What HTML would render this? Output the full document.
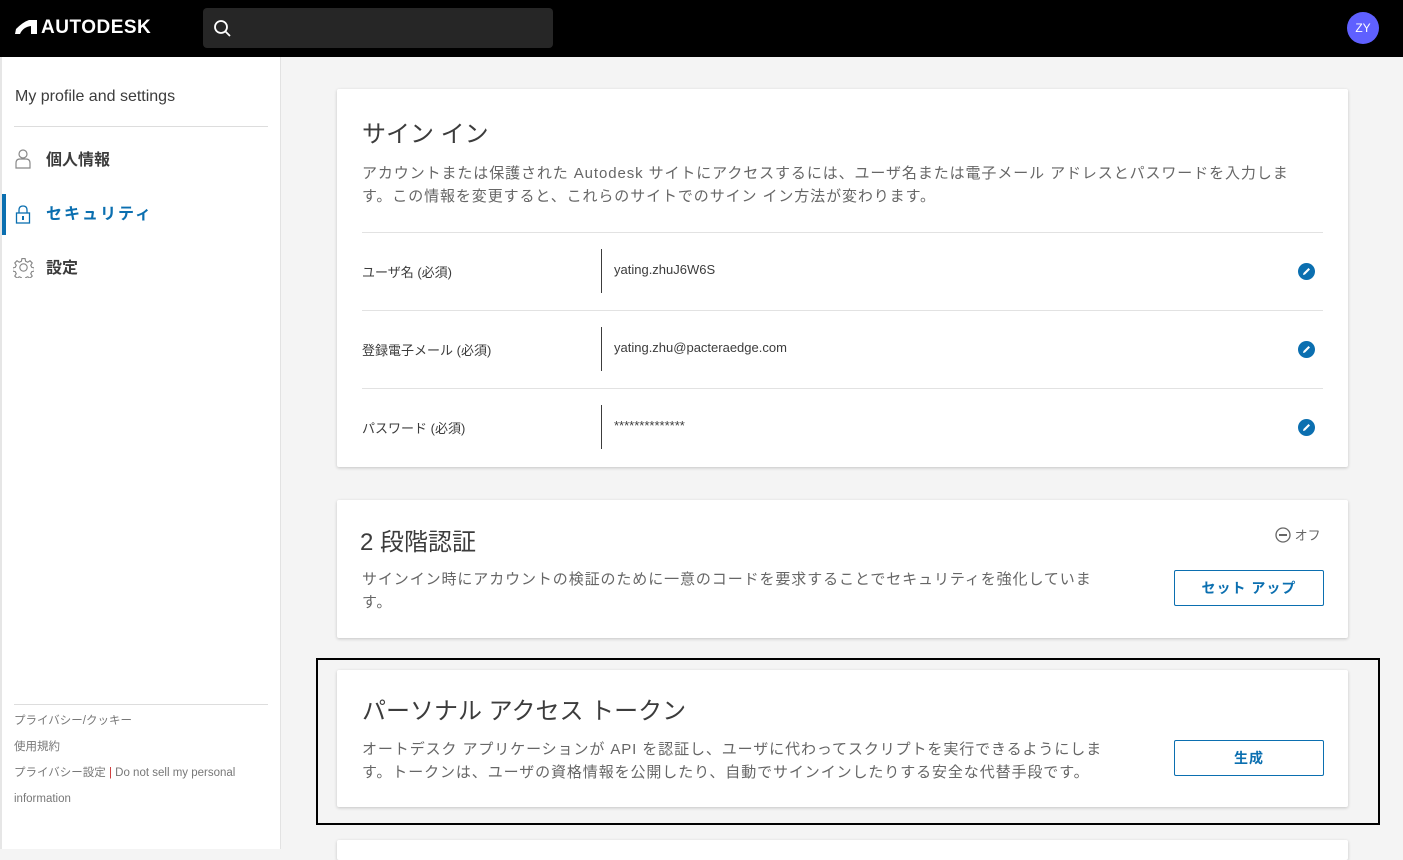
<!DOCTYPE html>
<html><head><meta charset="utf-8"><style>
*{margin:0;padding:0;box-sizing:border-box}
body{width:1403px;height:849px;overflow:hidden;background:#f4f4f4;font-family:"Liberation Sans","Noto Sans CJK JP",sans-serif;color:#3c3c3c;position:relative}
.top{position:absolute;left:0;top:0;width:1403px;height:57px;background:#000}
.logo{position:absolute;left:15px;top:17px;color:#fff;font-weight:bold;font-size:19px;letter-spacing:0.5px}
.search{position:absolute;left:203px;top:8px;width:350px;height:40px;background:#262626;border-radius:4px}
.av{position:absolute;left:1347px;top:12px;width:32px;height:32px;border-radius:50%;background:#5f60ff;color:#fff;font-size:12px;text-align:center;line-height:32px}
.side{position:absolute;left:0;top:57px;width:281px;height:792px;background:#fff;border-right:1px solid #e2e2e2;border-left:2px solid #e6e6e6}
.abs{position:absolute}
.card{position:absolute;left:337px;width:1011px;background:#fff;box-shadow:0 1px 3px rgba(0,0,0,.2);border-radius:2px}
.h{font-size:24px;color:#3c3c3c;font-weight:normal}
.p{font-size:15px;color:#666;line-height:23px;letter-spacing:0.9px;white-space:nowrap}
.lbl{font-size:13px;color:#3c3c3c}
.val{font-size:13px;color:#3c3c3c}
.pen{position:absolute;width:17px;height:17px;border-radius:50%;background:#0b6fb0}
.btn{position:absolute;width:150px;height:36px;border:1px solid #0b6fb0;border-radius:2px;color:#0b6fb0;font-weight:bold;font-size:14px;text-align:center;line-height:34px;letter-spacing:1px}
.hr{position:absolute;left:25px;width:961px;height:1px;background:#e2e2e2}
.vl{position:absolute;left:264px;width:1px;height:44px;background:#3c3c3c}
</style></head><body>
<div class="top">
<div class="logo"><svg width="22" height="14" viewBox="0 0 22 14" style="vertical-align:-1px;margin-right:4px"><path d="M0 14 L1 9 Q8 2 14 0 L22 0 L22 14 L16 14 L16 6 Q8 7 5 14Z" fill="#fff"/></svg>AUTODESK</div>
<div class="search"><svg width="20" height="20" viewBox="0 0 20 20" style="position:absolute;left:10px;top:11px"><circle cx="8" cy="8" r="6" stroke="#fff" stroke-width="1.8" fill="none"/><path d="M12.5 12.5 L17 17" stroke="#fff" stroke-width="1.8"/></svg></div>
<div class="av">ZY</div>
</div>
<div class="side">
<div class="abs" style="left:13px;top:31px;font-size:16px;color:#3c3c3c">My profile and settings</div>
<div class="abs" style="left:12px;top:69px;width:254px;height:1px;background:#ddd"></div>
<svg class="abs" style="left:13px;top:92px" width="16" height="20" viewBox="0 0 16 20"><circle cx="8" cy="5" r="4" fill="none" stroke="#888" stroke-width="1.2"/><path d="M1 19 V14 Q1 10 5 10 H11 Q15 10 15 14 V19Z" fill="none" stroke="#888" stroke-width="1.2"/></svg>
<div class="abs" style="left:44px;top:89px;font-size:16px;font-weight:bold;color:#3c3c3c">個人情報</div>
<div class="abs" style="left:0;top:137px;width:4px;height:41px;background:#0b6fb0"></div>
<svg class="abs" style="left:13px;top:147px" width="16" height="20" viewBox="0 0 16 20"><path d="M4 9 V6 Q4 2 8 2 Q12 2 12 6 V9" fill="none" stroke="#0b6fb0" stroke-width="1.3"/><rect x="1.5" y="9" width="13" height="10" fill="none" stroke="#0b6fb0" stroke-width="1.3"/><rect x="7" y="12" width="2" height="4" fill="#0b6fb0"/></svg>
<div class="abs" style="left:44px;top:143px;font-size:16px;font-weight:bold;color:#0b6fb0;letter-spacing:2px">セキュリティ</div>
<svg class="abs" style="left:11px;top:200px" width="21" height="21" viewBox="0 0 20 20"><circle cx="10" cy="10" r="3.5" fill="none" stroke="#888" stroke-width="1.1"/><path d="M8.5 1.5h3l.5 2.5 2 1 2.2-1.4 2.1 2.1-1.4 2.2 1 2 2.5.5v3l-2.5.5-1 2 1.4 2.2-2.1 2.1-2.200-1.4-2 1-.5 2.5h-3l-.5-2.5-2-1-2.2 1.4-2.1-2.1 1.4-2.2-1-2-2.5-.5v-3l2.5-.5 1-2-1.4-2.2 2.1-2.1 2.2 1.4 2-1z" fill="none" stroke="#888" stroke-width="1.1"/></svg>
<div class="abs" style="left:44px;top:197px;font-size:16px;font-weight:bold;color:#3c3c3c">設定</div>
<div class="abs" style="left:12px;top:647px;width:254px;height:1px;background:#ddd"></div>
<div class="abs" style="left:12px;top:651px;font-size:11.5px;color:#777;line-height:26px">プライバシー/クッキー<br>使用規約<br>プライバシー設定 <span style="color:#c33">|</span> Do not sell my personal<br>information</div>
</div>

<div class="card" style="top:89px;height:378px">
<div class="abs h" style="left:25px;top:25px">サイン イン</div>
<div class="abs p" style="left:25px;top:73px">アカウントまたは保護された Autodesk サイトにアクセスするには、ユーザ名または電子メール アドレスとパスワードを入力しま<br>す。この情報を変更すると、これらのサイトでのサイン イン方法が変わります。</div>
<div class="hr" style="top:143px"></div>
<div class="abs lbl" style="left:25px;top:173px">ユーザ名 (必須)</div><div class="vl" style="top:160px"></div><div class="abs val" style="left:277px;top:173px">yating.zhuJ6W6S</div>
<div class="hr" style="top:221px"></div>
<div class="abs lbl" style="left:25px;top:251px">登録電子メール (必須)</div><div class="vl" style="top:238px"></div><div class="abs val" style="left:277px;top:251px">yating.zhu@pacteraedge.com</div>
<div class="hr" style="top:299px"></div>
<div class="abs lbl" style="left:25px;top:329px">パスワード (必須)</div><div class="vl" style="top:316px"></div><div class="abs val" style="left:277px;top:329px">**************</div>
</div>
<div class="pen" style="left:1298px;top:263px"></div><div class="pen" style="left:1298px;top:341px"></div><div class="pen" style="left:1298px;top:419px"></div>
<svg class="abs" style="left:1298px;top:263px" width="17" height="17"><path d="M5 12 L5.5 10 L10.5 5 L12 6.5 L7 11.5Z" fill="#fff"/></svg>
<svg class="abs" style="left:1298px;top:341px" width="17" height="17"><path d="M5 12 L5.5 10 L10.5 5 L12 6.5 L7 11.5Z" fill="#fff"/></svg>
<svg class="abs" style="left:1298px;top:419px" width="17" height="17"><path d="M5 12 L5.5 10 L10.5 5 L12 6.5 L7 11.5Z" fill="#fff"/></svg>

<div class="card" style="top:500px;height:138px">
<div class="abs h" style="left:23px;top:22px">2 段階認証</div>
<div class="abs p" style="left:25px;top:68px">サインイン時にアカウントの検証のために一意のコードを要求することでセキュリティを強化していま<br>す。</div>
<div class="abs" style="left:938px;top:25px;font-size:13px;color:#666"><svg width="16" height="16" viewBox="0 0 16 16" style="vertical-align:-3px"><circle cx="8" cy="8" r="7" fill="none" stroke="#666" stroke-width="1.3"/><rect x="4" y="7" width="8" height="2" fill="#666"/></svg> オフ</div>
<div class="btn" style="left:837px;top:70px">セット アップ</div>
</div>

<div class="card" style="top:670px;height:137px">
<div class="abs h" style="left:25px;top:21px">パーソナル アクセス トークン</div>
<div class="abs p" style="left:25px;top:68px">オートデスク アプリケーションが API を認証し、ユーザに代わってスクリプトを実行できるようにしま<br>す。トークンは、ユーザの資格情報を公開したり、自動でサインインしたりする安全な代替手段です。</div>
<div class="btn" style="left:837px;top:70px">生成</div>
</div>
<div class="abs" style="left:316px;top:658px;width:1064px;height:167px;border:2px solid #000"></div>
<div class="card" style="top:840px;height:20px"></div>
</body></html>
